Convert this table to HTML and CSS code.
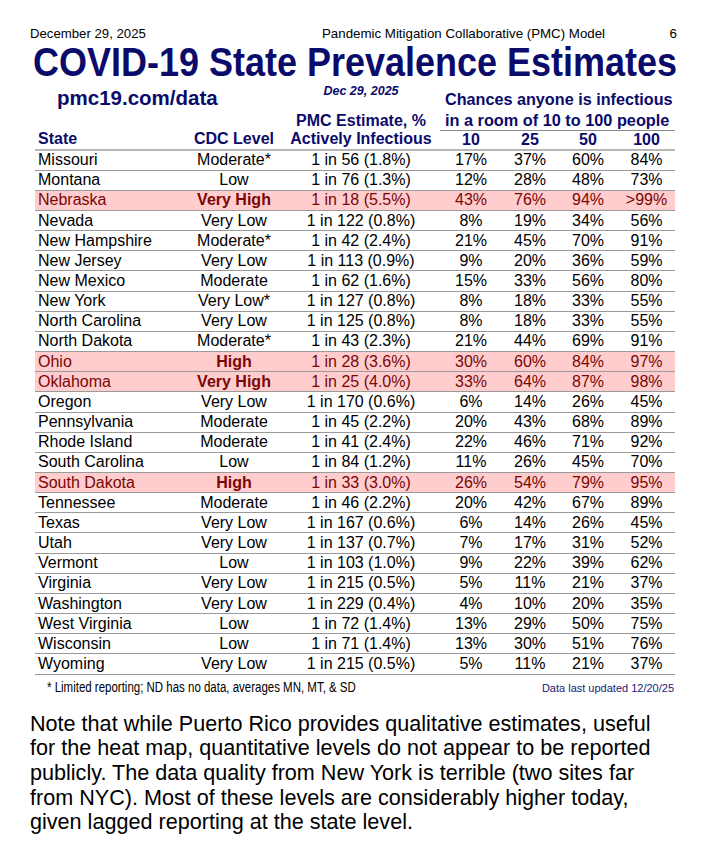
FILE: index.html
```html
<!DOCTYPE html>
<html>
<head>
<meta charset="utf-8">
<link rel="stylesheet" href="styles.css">
</head>
<body>
<div class="page">
  <div class="topline">
    <span class="tl-date">December 29, 2025</span>
    <span class="tl-mid">Pandemic Mitigation Collaborative (PMC) Model</span>
    <span class="tl-num">6</span>
  </div>
  <h1 class="title">COVID-19 State Prevalence Estimates</h1>
  <table class="grid">
    <colgroup>
      <col class="c-state"><col class="c-cdc"><col class="c-pmc"><col class="c-10"><col class="c-25"><col class="c-50"><col class="c-100">
    </colgroup>
    <thead>
      <tr class="hrow-a">
        <th colspan="2" class="site">pmc19.com/data</th>
        <th class="asof">Dec 29, 2025</th>
        <th colspan="4" class="chances">Chances anyone is infectious</th>
      </tr>
      <tr class="hrow-b">
        <th colspan="2"></th>
        <th class="hc">PMC Estimate, %</th>
        <th colspan="4" class="room">in a room of 10 to 100 people</th>
      </tr>
      <tr class="hrow-c">
        <th class="hl">State</th>
        <th class="hc">CDC Level</th>
        <th class="hc">Actively Infectious</th>
        <th class="hc">10</th>
        <th class="hc">25</th>
        <th class="hc">50</th>
        <th class="hc">100</th>
      </tr>
    </thead>
    <tbody>
      <tr><td>Missouri</td><td>Moderate*</td><td>1 in 56 (1.8%)</td><td>17%</td><td>37%</td><td>60%</td><td>84%</td></tr>
      <tr><td>Montana</td><td>Low</td><td>1 in 76 (1.3%)</td><td>12%</td><td>28%</td><td>48%</td><td>73%</td></tr>
      <tr class="hot"><td>Nebraska</td><td class="lvl">Very High</td><td>1 in 18 (5.5%)</td><td>43%</td><td>76%</td><td>94%</td><td>&gt;99%</td></tr>
      <tr><td>Nevada</td><td>Very Low</td><td>1 in 122 (0.8%)</td><td>8%</td><td>19%</td><td>34%</td><td>56%</td></tr>
      <tr><td>New Hampshire</td><td>Moderate*</td><td>1 in 42 (2.4%)</td><td>21%</td><td>45%</td><td>70%</td><td>91%</td></tr>
      <tr><td>New Jersey</td><td>Very Low</td><td>1 in 113 (0.9%)</td><td>9%</td><td>20%</td><td>36%</td><td>59%</td></tr>
      <tr><td>New Mexico</td><td>Moderate</td><td>1 in 62 (1.6%)</td><td>15%</td><td>33%</td><td>56%</td><td>80%</td></tr>
      <tr><td>New York</td><td>Very Low*</td><td>1 in 127 (0.8%)</td><td>8%</td><td>18%</td><td>33%</td><td>55%</td></tr>
      <tr><td>North Carolina</td><td>Very Low</td><td>1 in 125 (0.8%)</td><td>8%</td><td>18%</td><td>33%</td><td>55%</td></tr>
      <tr><td>North Dakota</td><td>Moderate*</td><td>1 in 43 (2.3%)</td><td>21%</td><td>44%</td><td>69%</td><td>91%</td></tr>
      <tr class="hot"><td>Ohio</td><td class="lvl">High</td><td>1 in 28 (3.6%)</td><td>30%</td><td>60%</td><td>84%</td><td>97%</td></tr>
      <tr class="hot"><td>Oklahoma</td><td class="lvl">Very High</td><td>1 in 25 (4.0%)</td><td>33%</td><td>64%</td><td>87%</td><td>98%</td></tr>
      <tr><td>Oregon</td><td>Very Low</td><td>1 in 170 (0.6%)</td><td>6%</td><td>14%</td><td>26%</td><td>45%</td></tr>
      <tr><td>Pennsylvania</td><td>Moderate</td><td>1 in 45 (2.2%)</td><td>20%</td><td>43%</td><td>68%</td><td>89%</td></tr>
      <tr><td>Rhode Island</td><td>Moderate</td><td>1 in 41 (2.4%)</td><td>22%</td><td>46%</td><td>71%</td><td>92%</td></tr>
      <tr><td>South Carolina</td><td>Low</td><td>1 in 84 (1.2%)</td><td>11%</td><td>26%</td><td>45%</td><td>70%</td></tr>
      <tr class="hot"><td>South Dakota</td><td class="lvl">High</td><td>1 in 33 (3.0%)</td><td>26%</td><td>54%</td><td>79%</td><td>95%</td></tr>
      <tr><td>Tennessee</td><td>Moderate</td><td>1 in 46 (2.2%)</td><td>20%</td><td>42%</td><td>67%</td><td>89%</td></tr>
      <tr><td>Texas</td><td>Very Low</td><td>1 in 167 (0.6%)</td><td>6%</td><td>14%</td><td>26%</td><td>45%</td></tr>
      <tr><td>Utah</td><td>Very Low</td><td>1 in 137 (0.7%)</td><td>7%</td><td>17%</td><td>31%</td><td>52%</td></tr>
      <tr><td>Vermont</td><td>Low</td><td>1 in 103 (1.0%)</td><td>9%</td><td>22%</td><td>39%</td><td>62%</td></tr>
      <tr><td>Virginia</td><td>Very Low</td><td>1 in 215 (0.5%)</td><td>5%</td><td>11%</td><td>21%</td><td>37%</td></tr>
      <tr><td>Washington</td><td>Very Low</td><td>1 in 229 (0.4%)</td><td>4%</td><td>10%</td><td>20%</td><td>35%</td></tr>
      <tr><td>West Virginia</td><td>Low</td><td>1 in 72 (1.4%)</td><td>13%</td><td>29%</td><td>50%</td><td>75%</td></tr>
      <tr><td>Wisconsin</td><td>Low</td><td>1 in 71 (1.4%)</td><td>13%</td><td>30%</td><td>51%</td><td>76%</td></tr>
      <tr><td>Wyoming</td><td>Very Low</td><td>1 in 215 (0.5%)</td><td>5%</td><td>11%</td><td>21%</td><td>37%</td></tr>
    </tbody>
  </table>
  <div class="footnote">
    <span class="fn-left">* Limited reporting; ND has no data, averages MN, MT, &amp; SD</span>
    <span class="fn-right">Data last updated 12/20/25</span>
  </div>
  <p class="note">Note that while Puerto Rico provides qualitative estimates, useful for the heat map, quantitative levels do not appear to be reported publicly. The data quality from New York is terrible (two sites far from NYC). Most of these levels are considerably higher today, given lagged reporting at the state level.</p>
</div>
</body>
</html>
```

FILE: styles.css
```css
* { box-sizing: border-box; }
html, body { margin: 0; padding: 0; background: #ffffff; }
body {
  font-family: "Liberation Sans", Arial, sans-serif;
  color: #000000;
  width: 713px;
  height: 844px;
  overflow: hidden;
}
.page { padding-top: 26px; }

.topline {
  display: grid;
  grid-template-columns: 292px 1fr auto;
  padding: 0 36px 0 30px;
  font-size: 13.3px;
  line-height: 15px;
}
.tl-date { font-size: 13.2px; }
.tl-num { text-align: right; }

.title {
  margin: 1px 0 0 33px;
  font-size: 40px;
  line-height: 40px;
  font-weight: bold;
  color: #0b0b6b;
  text-align: left;
  transform: scaleX(0.8995);
  transform-origin: 0 50%;
  white-space: nowrap;
}

.grid {
  margin-left: 35px;
  width: 640px;
  table-layout: fixed;
  border-collapse: collapse;
  font-size: 16px;
}
.c-state { width: 151px; }
.c-cdc { width: 96px; }
.c-pmc { width: 158px; }
.c-10 { width: 62px; }
.c-25 { width: 56px; }
.c-50 { width: 60px; }
.c-100 { width: 57px; }

.grid th {
  padding: 0;
  font-weight: bold;
  color: #0b0b6b;
  white-space: nowrap;
}
.hrow-a { height: 28px; }
.hrow-a .site {
  text-align: left;
  padding-left: 22px;
  vertical-align: bottom;
  font-size: 20.5px;
  line-height: 24px;
}
.hrow-a .asof {
  vertical-align: top;
  font-size: 12.5px;
  font-style: italic;
  line-height: 16px;
  padding-top: 1px;
}
.hrow-a .chances {
  text-align: left;
  padding-left: 5px;
  vertical-align: bottom;
  line-height: 20px;
  padding-bottom: 1px;
  font-size: 16.2px;
}
.hrow-b { height: 20px; }
.hrow-b th { line-height: 19px; vertical-align: bottom; }
.hrow-b .room {
  text-align: left;
  padding-left: 5px;
  border-bottom: 1px solid #8a8a8a;
  font-size: 16.3px;
}
.hrow-c { height: 20px; border-bottom: 2px solid #b8b8b8; }
.hrow-c th { line-height: 18px; vertical-align: top; }
.hl { text-align: left; padding-left: 3px !important; }
.hc { text-align: center; }

.grid td {
  padding: 0;
  height: 20.16px;
  line-height: 18px;
  text-align: center;
  white-space: nowrap;
}
.grid td:first-child { text-align: left; padding-left: 3px; }
.grid tbody tr { border-bottom: 1px solid #9a9a9a; }
.grid tbody tr.hot { background: #ffcdcd; color: #7a0606; }
.grid tbody tr.hot .lvl { font-weight: bold; }

.footnote {
  display: flex;
  justify-content: space-between;
  align-items: baseline;
  padding: 3px 39px 0 47px;
}
.fn-left {
  display: inline-block;
  font-size: 14px;
  line-height: 18px;
  white-space: nowrap;
  width: 308px;
  transform: scaleX(0.82);
  transform-origin: 0 50%;
}
.fn-right { font-size: 11px; color: #1a1a7a; }

.note {
  margin: 16px 0 0 30px;
  width: 640px;
  font-size: 21.6px;
  line-height: 24.7px;
}
```
